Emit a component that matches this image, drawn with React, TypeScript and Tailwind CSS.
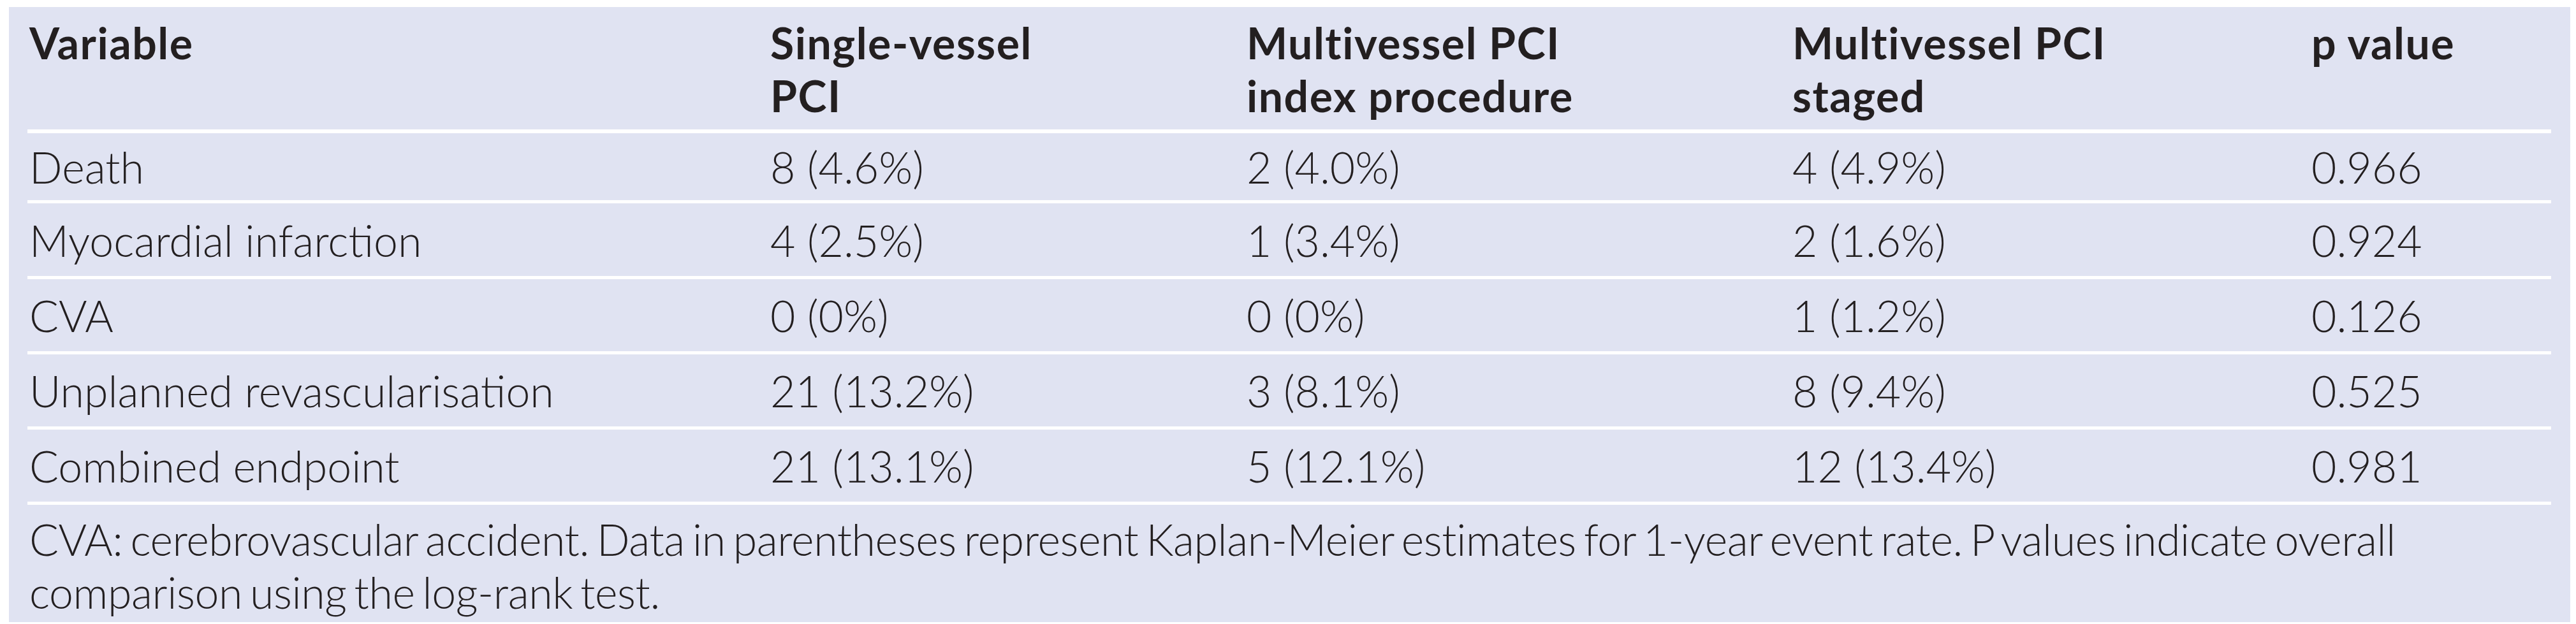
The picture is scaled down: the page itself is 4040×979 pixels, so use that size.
const rows = [
  { label: 'Death', a: '8 (4.6%)', b: '2 (4.0%)', c: '4 (4.9%)', p: '0.966', h: 'h-[110px]' },
  { label: 'Myocardial infarction', a: '4 (2.5%)', b: '1 (3.4%)', c: '2 (1.6%)', p: '0.924', h: 'h-[119px]' },
  { label: 'CVA', a: '0 (0%)', b: '0 (0%)', c: '1 (1.2%)', p: '0.126', h: 'h-[118px]' },
  { label: 'Unplanned revascularisation', a: '21 (13.2%)', b: '3 (8.1%)', c: '8 (9.4%)', p: '0.525', h: 'h-[118px]' },
  { label: 'Combined endpoint', a: '21 (13.1%)', b: '5 (12.1%)', c: '12 (13.4%)', p: '0.981', h: 'h-[118px]' },
];

const cols = 'grid grid-cols-[1162px_747px_856px_814px_1fr]';

export default function App() {
  return (
    <div className="w-[4040px] h-[979px] bg-white pt-[11px] pl-[14px]">
      <div
        className="w-[4017px] h-[965px] bg-[#e0e3f2] pl-[29px] pr-[30px] text-[#231f20] text-[68px] leading-[83px]"
        style={{ fontFamily: 'Lato, "Open Sans", sans-serif' }}
      >
        <div className={`${cols} h-[198px] border-b-[6px] border-white pt-[14px] font-bold tracking-[1.5px]`}>
          <div className="pl-[3px]">Variable</div>
          <div className="pl-[3px]">
            Single-vessel
            <br />
            PCI
          </div>
          <div className="pl-[3px]">
            Multivessel PCI
            <br />
            index procedure
          </div>
          <div className="pl-[3px]">
            Multivessel PCI
            <br />
            staged
          </div>
          <div className="pl-[3px]">p value</div>
        </div>

        {rows.map((r) => (
          <div
            key={r.label}
            className={`${cols} ${r.h} items-center border-b-[5px] border-white font-light`}
          >
            <div className="pl-[3px]">{r.label}</div>
            <div className="pl-[3px]">{r.a}</div>
            <div className="pl-[3px]">{r.b}</div>
            <div className="pl-[3px]">{r.c}</div>
            <div className="pl-[3px]">{r.p}</div>
          </div>
        ))}

        <div className="pl-[3px] pt-[12px] font-light whitespace-nowrap tracking-[-0.4px] [word-spacing:-6px]">
          CVA: cerebrovascular accident. Data in parentheses represent Kaplan-Meier estimates for 1-year event rate. P values indicate overall
          <br />
          comparison using the log-rank test.
        </div>
      </div>
    </div>
  );
}
